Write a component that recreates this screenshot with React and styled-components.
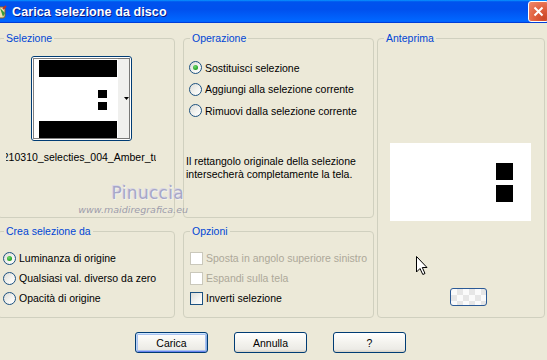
import React from "react";
import styled, { createGlobalStyle } from "styled-components";

const GlobalStyle = createGlobalStyle`
  html, body {
    margin: 0;
    padding: 0;
    background: #ece9d8;
  }
`;

const Window = styled.div`
  position: relative;
  width: 547px;
  height: 360px;
  overflow: hidden;
  background: #ece9d8;
  display: flex;
  flex-direction: column;
  font-family: "Liberation Sans", Arial, sans-serif;
  font-size: 10.5px;
  color: #000;
`;

const TitleBar = styled.div`
  height: 23px;
  flex: none;
  display: flex;
  align-items: center;
  background: linear-gradient(
    180deg,
    #0997ff,
    #0053ee 8%,
    #0050ee 40%,
    #0066ff 88%,
    #0066ff 93%,
    #005bff 95%,
    #003dd7 96%,
    #003dd7
  );
`;

const TitleIcon = styled.svg`
  width: 16px;
  height: 16px;
  margin-left: -9px;
  flex: none;
`;

const Title = styled.div`
  margin-left: 5px;
  flex: 1;
  color: #fff;
  font-weight: bold;
  font-size: 12.5px;
  text-shadow: 1px 1px 0 #0a1883;
  letter-spacing: 0.1px;
`;

const CloseButton = styled.div`
  width: 21px;
  height: 21px;
  margin-right: -2px;
  box-sizing: border-box;
  border: 1px solid #fff;
  border-radius: 3px;
  background: radial-gradient(circle at 80% 85%, #cc4628 0%, #e0603f 45%, #ef8a6d 100%);
  display: flex;
  align-items: center;
  justify-content: center;
`;

const Body = styled.div`
  flex: 1;
  display: flex;
  flex-direction: column;
  padding-top: 9px;
`;

const Panels = styled.div`
  display: grid;
  margin-left: -3px;
  grid-template-columns: 186px 194px 168px;
  grid-template-rows: 186px 93px;
  row-gap: 7px;
`;

const Group = styled.fieldset`
  margin: 0;
  padding: 0;
  min-width: 0;
  box-sizing: border-box;
  width: ${(p) => p.$w}px;
  height: 100%;
  border: 1px solid #d0d0bf;
  border-radius: 4px;
  grid-column: ${(p) => p.$col};
  grid-row: ${(p) => p.$row};
  display: flex;
  flex-direction: column;
  align-items: flex-start;
`;

const Legend = styled.legend`
  color: #0046d5;
  padding: 0 2px;
  margin-left: 6px;
  line-height: 13px;
`;

const Thumb = styled.div`
  margin: 11px 0 0 33px;
  width: 101px;
  height: 85px;
  box-sizing: border-box;
  border: 1px solid #003c74;
  border-radius: 3px;
  background: #fff;
  display: flex;
`;

const FileName = styled.div`
  margin: 10px 0 0 8px;
  width: 150px;
  overflow: hidden;
  display: flex;
  justify-content: center;
  white-space: nowrap;
  line-height: 13px;
`;

const OptionList = styled.div`
  margin: ${(p) => p.$top}px 0 0 ${(p) => p.$left}px;
  display: flex;
  flex-direction: column;
`;

const OptionRow = styled.label`
  height: ${(p) => p.$h}px;
  display: flex;
  align-items: center;
  gap: 3px;
  white-space: nowrap;
  color: ${(p) => (p.$disabled ? "#aca899" : "#000")};
`;

const Radio = styled.span`
  width: 13px;
  height: 13px;
  box-sizing: border-box;
  border-radius: 50%;
  border: 1px solid #1c5180;
  background: linear-gradient(135deg, #dcdcd7 0%, #f5f5f2 60%, #fff 100%);
  display: flex;
  align-items: center;
  justify-content: center;
  flex: none;

  &::after {
    content: "";
    width: 5px;
    height: 5px;
    border-radius: 50%;
    background: radial-gradient(circle at 40% 35%, #72d86f, #21a121 70%);
    display: ${(p) => (p.$checked ? "block" : "none")};
  }
`;

const Check = styled.span`
  width: 13px;
  height: 13px;
  box-sizing: border-box;
  border: 1px solid ${(p) => (p.$disabled ? "#cac8bb" : "#1c5180")};
  background: ${(p) =>
    p.$disabled ? "#fff" : "linear-gradient(135deg, #dcdcd7 0%, #f5f5f2 60%, #fff 100%)"};
  flex: none;
  margin-left: 1px;
`;

const Note = styled.div`
  margin: 33px 0 0 2px;
  line-height: 13px;
`;

const PreviewBox = styled.div`
  margin: 98px 0 0 12px;
  width: 141px;
  height: 78px;
  background: #fff;
  display: flex;
`;

const SmallButton = styled.div`
  margin: 67px 0 0 72px;
  width: 37px;
  height: 18px;
  box-sizing: border-box;
  border: 1px solid #2b5a96;
  border-radius: 3px;
  background: repeating-conic-gradient(#e6e6e6 0% 25%, #fafafa 0% 50%) 0 0 / 12px 12px;
`;

const ButtonRow = styled.div`
  margin-top: 14px;
  padding-left: 135px;
  display: flex;
  gap: 26px;
`;

const Button = styled.button`
  width: 73px;
  height: 21px;
  padding: 0;
  box-sizing: border-box;
  border: 1px solid #003c74;
  border-radius: 3px;
  font-family: inherit;
  font-size: 10.5px;
  color: #000;
  background: linear-gradient(180deg, #ffffff 0%, #f4f3ee 50%, #ecebe6 86%, #d6d0c5 100%);
  box-shadow: ${(p) =>
    p.$default
      ? "inset 0 1px 0 #cee7ff, inset 1px 0 0 #bcd4f6, inset -1px 0 0 #89ade4, inset 0 -1px 0 #6982ee, inset 0 0 0 2px #a9c2f0"
      : "none"};
`;

const Watermark = styled.div`
  position: absolute;
  left: 82px;
  top: 183px;
  width: 106px;
  display: flex;
  flex-direction: column;
  align-items: flex-end;
  pointer-events: none;
`;

const WatermarkName = styled.div`
  margin-right: 4px;
  font-family: "DejaVu Sans", sans-serif;
  font-size: 17px;
  line-height: 20px;
  letter-spacing: 0.3px;
  color: #a7a7c9;
  text-shadow: 1px 1px 0 #f4f3ee, -1px -1px 0 #d8d7e6;
`;

const WatermarkUrl = styled.div`
  margin-top: 1px;
  font-family: "DejaVu Sans", sans-serif;
  font-style: italic;
  font-size: 9.5px;
  color: #9c9cab;
  white-space: nowrap;
`;

const Cursor = styled.svg`
  position: absolute;
  left: 416px;
  top: 256px;
  width: 12px;
  height: 19px;
`;

const Radios = ({ items, checked, h, top, left }) => (
  <OptionList $top={top} $left={left}>
    {items.map((t, i) => (
      <OptionRow key={t} $h={h}>
        <Radio $checked={i === checked} />
        {t}
      </OptionRow>
    ))}
  </OptionList>
);

export default function App() {
  return (
    <>
      <GlobalStyle />
      <Window>
        <TitleBar>
          <TitleIcon viewBox="0 0 16 16">
            <rect x="2" y="3" width="12" height="11" rx="2" fill="#f2e2b0" stroke="#7a5a2a" />
            <path d="M9 4 L14 9 L12 13 Z" fill="#3a9a3a" />
            <path d="M12 5 L15 2" stroke="#c03020" strokeWidth="2" />
          </TitleIcon>
          <Title>Carica selezione da disco</Title>
          <CloseButton>
            <svg width="11" height="11" viewBox="0 0 11 11">
              <path d="M1.5 1.5 L9.5 9.5 M9.5 1.5 L1.5 9.5" stroke="#fff" strokeWidth="2" />
            </svg>
          </CloseButton>
        </TitleBar>
        <Body>
          <Panels>
            <Group $w={178} $col={1} $row={1}>
              <Legend>Selezione</Legend>
              <Thumb>
                <svg width="99" height="83" viewBox="0 0 99 83">
                  <rect x="86" y="1" width="12" height="81" fill="#f0f0ee" />
                  <rect x="7" y="3" width="78" height="17" fill="#000" />
                  <rect x="7" y="64" width="78" height="17" fill="#000" />
                  <rect x="66" y="33" width="9" height="8" fill="#000" />
                  <rect x="66" y="45" width="9" height="8" fill="#000" />
                  <path d="M92 40 L97 40 L94.5 43 Z" fill="#000" />
                  <rect
                    x="1.5"
                    y="1.5"
                    width="96"
                    height="80"
                    fill="none"
                    stroke="#000"
                    strokeDasharray="1 1"
                  />
                </svg>
              </Thumb>
              <FileName>
                <span>20210310_selecties_004_Amber_tube</span>
              </FileName>
            </Group>
            <Group $w={191} $col={2} $row={1}>
              <Legend>Operazione</Legend>
              <Radios
                top={12}
                left={5}
                h={21.5}
                checked={0}
                items={[
                  "Sostituisci selezione",
                  "Aggiungi alla selezione corrente",
                  "Rimuovi dalla selezione corrente",
                ]}
              />
              <Note>
                Il rettangolo originale della selezione
                <br />
                intersecherà completamente la tela.
              </Note>
            </Group>
            <Group $w={168} $col={3} $row="1 / span 2">
              <Legend>Anteprima</Legend>
              <PreviewBox>
                <svg width="141" height="78" viewBox="0 0 141 78">
                  <rect x="106" y="20" width="17" height="17" fill="#000" />
                  <rect x="106" y="42" width="17" height="17" fill="#000" />
                </svg>
              </PreviewBox>
              <SmallButton />
            </Group>
            <Group $w={178} $col={1} $row={2}>
              <Legend>Crea selezione da</Legend>
              <Radios
                top={10}
                left={5}
                h={20}
                checked={0}
                items={[
                  "Luminanza di origine",
                  "Qualsiasi val. diverso da zero",
                  "Opacità di origine",
                ]}
              />
            </Group>
            <Group $w={191} $col={2} $row={2}>
              <Legend>Opzioni</Legend>
              <OptionList $top={10} $left={5}>
                <OptionRow $h={20} $disabled>
                  <Check $disabled />
                  Sposta in angolo superiore sinistro
                </OptionRow>
                <OptionRow $h={20} $disabled>
                  <Check $disabled />
                  Espandi sulla tela
                </OptionRow>
                <OptionRow $h={20}>
                  <Check />
                  Inverti selezione
                </OptionRow>
              </OptionList>
            </Group>
          </Panels>
          <ButtonRow>
            <Button $default>Carica</Button>
            <Button>Annulla</Button>
            <Button>?</Button>
          </ButtonRow>
        </Body>
        <Watermark>
          <WatermarkName>Pinuccia</WatermarkName>
          <WatermarkUrl>www.maidiregrafica.eu</WatermarkUrl>
        </Watermark>
        <Cursor viewBox="0 0 12 19">
          <path
            d="M0.5 0.5 L0.5 16 L4 12.5 L6.8 18.5 L9 17.5 L6.3 11.5 L11 11.5 Z"
            fill="#fff"
            stroke="#000"
            strokeWidth="1"
          />
        </Cursor>
      </Window>
    </>
  );
}
